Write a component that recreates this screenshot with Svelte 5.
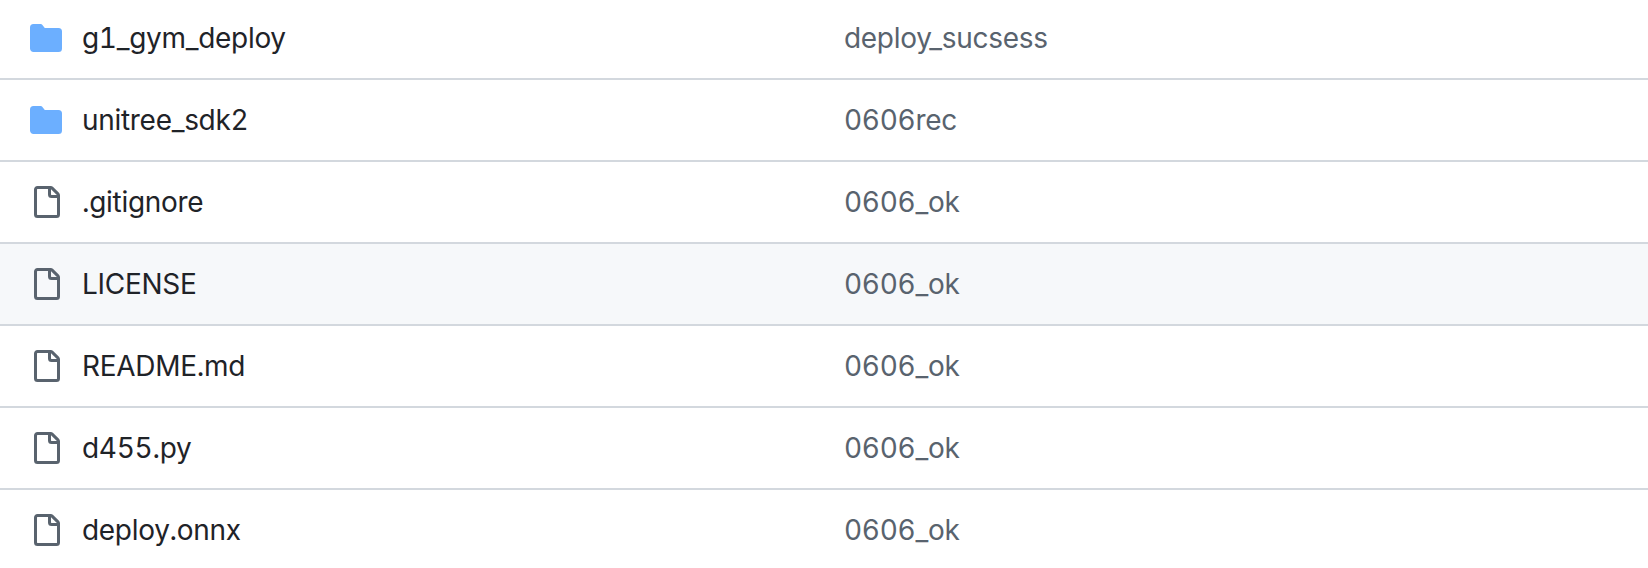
<script lang="ts">
	const dirPath =
		'M1.75 1A1.75 1.75 0 0 0 0 2.75v10.5C0 14.216.784 15 1.75 15h12.5A1.75 1.75 0 0 0 16 13.25v-8.5A1.75 1.75 0 0 0 14.25 3H7.5a.25.25 0 0 1-.2-.1l-.9-1.2C6.07 1.26 5.55 1 5 1H1.75Z';
	const filePath =
		'M2 1.75C2 .784 2.784 0 3.75 0h6.586c.464 0 .909.184 1.237.513l2.914 2.914c.329.328.513.773.513 1.237v9.586A1.75 1.75 0 0 1 13.25 16h-9.5A1.75 1.75 0 0 1 2 14.25Zm1.75-.25a.25.25 0 0 0-.25.25v12.5c0 .138.112.25.25.25h9.5a.25.25 0 0 0 .25-.25V6h-2.75A1.75 1.75 0 0 1 9 4.25V1.5Zm6.75.062V4.25c0 .138.112.25.25.25h2.688l-.011-.013-2.914-2.914-.013-.011Z';

	const rows = [
		{ name: 'g1_gym_deploy', message: 'deploy_sucsess', dir: true },
		{ name: 'unitree_sdk2', message: '0606rec', dir: true },
		{ name: '.gitignore', message: '0606_ok', dir: false },
		{ name: 'LICENSE', message: '0606_ok', dir: false, hover: true },
		{ name: 'README.md', message: '0606_ok', dir: false },
		{ name: 'd455.py', message: '0606_ok', dir: false },
		{ name: 'deploy.onnx', message: '0606_ok', dir: false }
	];
</script>

<div class="table">
	{#each rows as row}
		<div class="row" class:hover={row.hover}>
			<div class="name">
				<svg class="icon" class:dir={row.dir} viewBox="0 0 16 16" width="32" height="32" aria-hidden="true">
					<path d={row.dir ? dirPath : filePath} />
				</svg>
				<span>{row.name}</span>
			</div>
			<div class="message">{row.message}</div>
		</div>
	{/each}
</div>

<style>
	:global(body) {
		background: #fff;
		overflow: hidden;
	}

	.table {
		margin-top: -2px;
		font-family: Inter, "Liberation Sans", sans-serif;
		font-size: 28px;
		line-height: 42px;
		letter-spacing: -0.3px;
		font-variant-numeric: tabular-nums;
	}

	.row {
		display: grid;
		grid-template-columns: 844px 1fr;
		height: 80px;
		align-items: center;
		border-bottom: 2px solid #d3d8de;
	}

	.row:last-child {
		border-bottom: 0;
	}

	.row.hover {
		background: #f6f8fa;
	}

	.name {
		display: flex;
		align-items: center;
		gap: 20px;
		padding-left: 30px;
		color: #1f2328;
	}

	.icon {
		flex: none;
		fill: #59636e;
	}

	.icon.dir {
		fill: #6cafff;
	}

	.message {
		color: #59636e;
	}
</style>
